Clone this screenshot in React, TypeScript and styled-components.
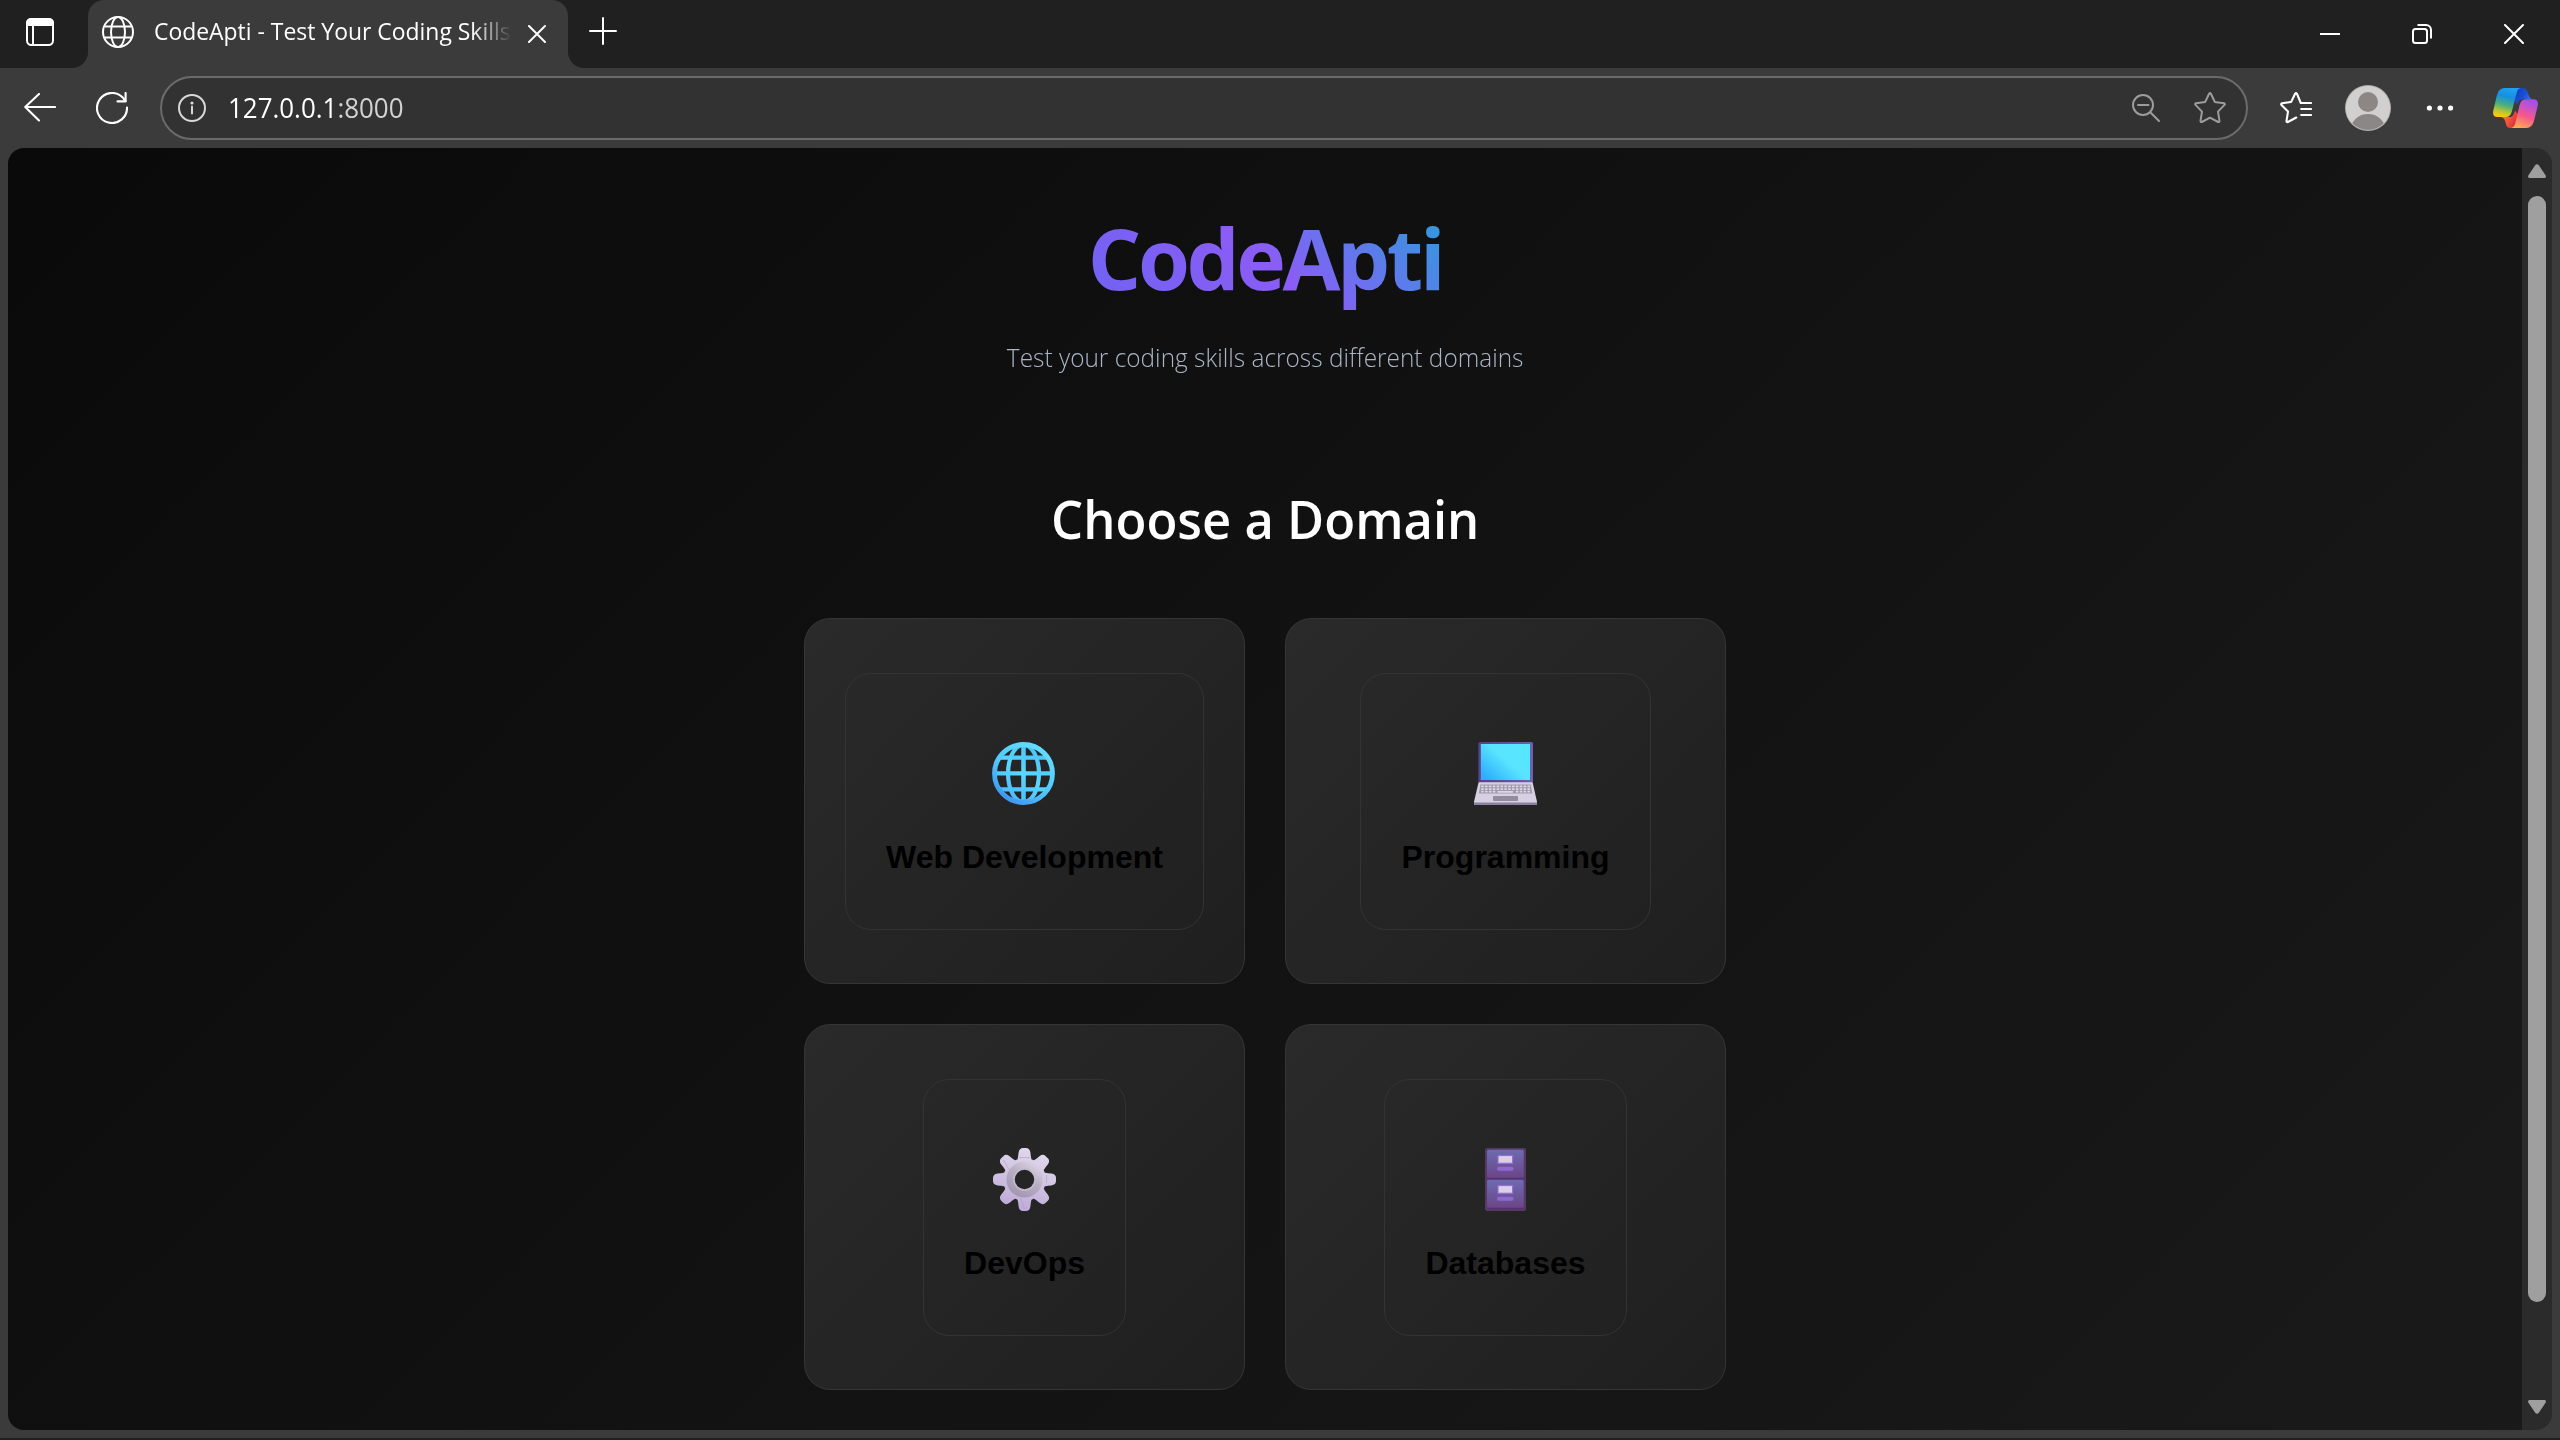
import React from 'react';
import styled, { createGlobalStyle } from 'styled-components';

const UI_FONT = "'Open Sans', 'Noto Sans', sans-serif";
const BUTTON_FONT = "'Liberation Sans', Arial, sans-serif";

const GlobalStyle = createGlobalStyle`
  * { box-sizing: border-box; }
  body { margin: 0; background: #3b3b3b; overflow: hidden; }
  svg { display: block; flex: none; }
`;

/* ---------- browser window ---------- */

const Window = styled.div`
  width: 2560px;
  height: 1440px;
  display: flex;
  flex-direction: column;
  overflow: hidden;
  background: #3b3b3b;
  border-bottom: 2px solid #211e1f;
  font-family: ${UI_FONT};
`;

const TabStrip = styled.div`
  height: 68px;
  flex: none;
  display: flex;
  background: #202020;
`;

const TabActions = styled.div`
  width: 88px;
  padding: 18px 0 0 26px;
`;

const Tab = styled.div`
  position: relative;
  width: 480px;
  height: 68px;
  padding: 0 22px 4px 14px;
  display: flex;
  align-items: center;
  background: #3b3b3b;
  border-radius: 16px 16px 0 0;

  &::before,
  &::after {
    content: '';
    position: absolute;
    bottom: 0;
    width: 16px;
    height: 16px;
  }
  &::before {
    left: -16px;
    background: radial-gradient(circle at 0 0, #202020 15.5px, #3b3b3b 16.5px);
  }
  &::after {
    right: -16px;
    background: radial-gradient(circle at 100% 0, #202020 15.5px, #3b3b3b 16.5px);
  }
`;

const TabTitle = styled.div`
  width: 358px;
  margin-left: 20px;
  height: 40px;
  overflow: hidden;
  mask-image: linear-gradient(90deg, #000 318px, transparent 358px);
`;

const Condensed = styled.span<{ $scale: number; $origin?: string }>`
  display: inline-block;
  white-space: nowrap;
  transform: scaleX(${(p) => p.$scale});
  transform-origin: ${(p) => p.$origin ?? 'left'} center;
`;

const TabText = styled(Condensed)`
  font-size: 23.5px;
  line-height: 39px;
  color: #fff;
`;

const TabClose = styled.div`
  margin-left: auto;
  padding-top: 3px;
`;

const NewTab = styled.div`
  padding: 17px 0 0 21px;
`;

const WindowControls = styled.div`
  margin-left: auto;
  padding: 24px 36px 0 0;
  display: flex;
  gap: 72px;
`;

const Toolbar = styled.div`
  height: 80px;
  flex: none;
  display: flex;
  align-items: center;
  padding: 0 22px 0 24px;
`;

const NavButtons = styled.div`
  width: 136px;
  display: flex;
  align-items: center;
  gap: 40px;
`;

const AddressBar = styled.div`
  width: 2088px;
  height: 64px;
  display: flex;
  align-items: center;
  padding: 0 20px 0 16px;
  border: 2px solid #6b6b6b;
  border-radius: 32px;
  background: #323232;
`;

const Url = styled.div`
  margin-left: 22px;
  flex: 1;
  font-size: 28px;
  line-height: 44px;
  padding-bottom: 2px;
  color: #fff;
`;

const Port = styled.span`
  color: #d2d2d2;
`;

const AddressActions = styled.div`
  display: flex;
  align-items: center;
  gap: 34px;
`;

const ToolbarActions = styled.div`
  flex: 1;
  display: flex;
  align-items: center;
  gap: 33px;
  padding-left: 32px;
`;

const CopilotButton = styled.div`
  margin-left: auto;
`;

/* ---------- page viewport ---------- */

const Viewport = styled.div`
  flex: none;
  height: 1282px;
  margin: 0 8px;
  display: flex;
  overflow: hidden;
  border-radius: 16px;
  background: #2b2b2b;
`;

const Page = styled.main`
  flex: 1;
  height: 1375px;
  display: flex;
  flex-direction: column;
  align-items: center;
  padding-top: 54px;
  background: linear-gradient(135deg, #0a0a0a 0%, #1a1a1a 100%);
`;

const Scrollbar = styled.div`
  width: 30px;
  height: 1282px;
  display: flex;
  flex-direction: column;
  align-items: center;
  padding: 16px 0 16px;
`;

const Thumb = styled.div`
  width: 18px;
  height: 1106px;
  margin: 18px 0 98px;
  border-radius: 9px;
  background: #9f9f9f;
`;

const Header = styled.header`
  width: 516px;
  display: flex;
  flex-direction: column;
  align-items: center;
`;

const Title = styled.h1`
  width: 516px;
  margin: 0;
  text-align: center;
  font-size: 84px;
  font-weight: 700;
  line-height: 112px;
  letter-spacing: -3.4px;
  white-space: nowrap;
  color: transparent;
  background: linear-gradient(45deg, #6366f1, #8b5cf6, #06b6d4);
  background-clip: text;
  -webkit-background-clip: text;
`;

const Subtitle = styled.p`
  margin: 23px 0 0;
  font-size: 26.2px;
  font-weight: 300;
  line-height: 40px;
  color: #a9b6c6;
`;

const SectionTitle = styled.h2`
  margin: 106px 0 63px;
  font-size: 52.4px;
  font-weight: 600;
  line-height: 72px;
  color: #fff;
`;

const DomainGrid = styled.section`
  display: grid;
  grid-template-columns: repeat(2, 441px);
  grid-auto-rows: 366px;
  gap: 40px;
`;

const DomainCard = styled.div`
  display: flex;
  flex-direction: column;
  align-items: center;
  padding-top: 54px;
  border: 1px solid #353535;
  border-radius: 26px;
  background: linear-gradient(135deg, #2a2a2a 0%, #1f1f1f 100%);
`;

const DomainButton = styled.button`
  height: 257px;
  margin: 0;
  padding: 68px 40px 0;
  display: flex;
  flex-direction: column;
  align-items: center;
  border: 1px solid #333333;
  border-radius: 26px;
  background: transparent;
  color: #000;
  font-family: ${BUTTON_FONT};
`;

const DomainName = styled.span`
  margin-top: 34px;
  font-size: 32px;
  font-weight: 700;
  line-height: 37px;
  white-space: nowrap;
`;

/* ---------- browser icons ---------- */

const TabActionsIcon = () => (
  <svg width="28" height="28" viewBox="0 0 28 28" fill="none">
    <rect x="1" y="1" width="26" height="26" rx="4.5" stroke="#fff" strokeWidth="2" />
    <path d="M0 8V5a5 5 0 0 1 5-5h18a5 5 0 0 1 5 5v3z" fill="#fff" />
    <path d="M7 8v19" stroke="#fff" strokeWidth="2" />
  </svg>
);

const TabGlobe = () => (
  <svg width="32" height="32" viewBox="0 0 32 32" fill="none" stroke="#fff" strokeWidth="2">
    <circle cx="16" cy="16" r="15" />
    <ellipse cx="16" cy="16" rx="7" ry="15" />
    <path d="M2.5 10.5h27M2.5 21.5h27" />
  </svg>
);

const Cross = ({ size, weight }: { size: number; weight: number }) => (
  <svg width={size} height={size} viewBox={`0 0 ${size} ${size}`} fill="none" stroke="#fff" strokeWidth={weight} strokeLinecap="round">
    <path d={`M1 1L${size - 1} ${size - 1}M${size - 1} 1L1 ${size - 1}`} />
  </svg>
);

const Plus = () => (
  <svg width="28" height="28" viewBox="0 0 28 28" stroke="#fff" strokeWidth="2" strokeLinecap="round">
    <path d="M14 1v26M1 14h26" />
  </svg>
);

const Minimize = () => (
  <svg width="20" height="20" viewBox="0 0 20 20">
    <path d="M0 10h20" stroke="#fff" strokeWidth="2" />
  </svg>
);

const Restore = () => (
  <svg width="20" height="20" viewBox="0 0 20 20" fill="none" stroke="#fff" strokeWidth="2">
    <rect x="1" y="5" width="14" height="14" rx="2.5" />
    <path d="M5.5 1H14a5 5 0 0 1 5 5v8.5" />
  </svg>
);

const BackArrow = () => (
  <svg width="32" height="30" viewBox="0 0 32 30" fill="none" stroke="#fff" strokeWidth="2.1" strokeLinecap="round" strokeLinejoin="round">
    <path d="M31 14H1.2M15 1L1.2 14 15 27.5" />
  </svg>
);

const Reload = () => (
  <svg width="32" height="32" viewBox="0 0 32 32" fill="none" stroke="#fff" strokeWidth="2.1" strokeLinecap="round" strokeLinejoin="round">
    <path d="M31 15.5A15 15 0 1 1 26.8 5.6L29.5 9" />
    <path d="M29.6 1v8.4H21.5" />
  </svg>
);

const Info = () => (
  <svg width="28" height="28" viewBox="0 0 28 28" fill="none" stroke="#d8d8d8" strokeWidth="2" strokeLinecap="round">
    <circle cx="14" cy="14" r="13" />
    <path d="M14 12.5v7" />
    <circle cx="14" cy="9" r="1.6" fill="#d8d8d8" stroke="none" />
  </svg>
);

const ZoomOut = () => (
  <svg width="28" height="28" viewBox="0 0 28 28" fill="none" stroke="#9c9c9c" strokeWidth="2" strokeLinecap="round">
    <circle cx="11" cy="11" r="10" />
    <path d="M6 11h10.5M18.5 18.5L27 27" />
  </svg>
);

const Star = () => (
  <svg width="32" height="32" viewBox="0 0 32 32" fill="none" stroke="#9c9c9c" strokeWidth="2" strokeLinejoin="round">
    <path d="M15.1 1.7q.9-1.4 1.8 0L20.8 9.9 30 11.3q1.4.5.5 1.6L24 19.6l1.5 9.3q0 1.6-1.4 1.1L16 25.7 7.9 30q-1.4.5-1.4-1.1L8 19.6 1.5 12.9q-.9-1.1.5-1.6L11.2 9.9z" />
  </svg>
);

const Favorites = () => (
  <svg width="32" height="32" viewBox="0 0 32 32" fill="none" stroke="#fff" strokeWidth="2.1" strokeLinecap="round" strokeLinejoin="round">
    <path d="M31 11h-10.2L16.9 1.7q-.9-1.4-1.8 0L11.2 9.9 2 11.3q-1.4.5-.5 1.6L8 19.6 6.5 28.9q0 1.6 1.4 1.1L16.3 25.5M21.2 17H31M21.2 23H31" />
  </svg>
);

const Avatar = () => (
  <svg width="46" height="46" viewBox="0 0 46 46">
    <defs>
      <clipPath id="avatar-clip"><circle cx="23" cy="23" r="22" /></clipPath>
    </defs>
    <circle cx="23" cy="23" r="23" fill="#b5b3b1" />
    <circle cx="23" cy="23" r="22" fill="#d2d0ce" />
    <g fill="#8a8785">
      <circle cx="23" cy="17" r="10" />
      <ellipse cx="23" cy="44" rx="17" ry="15" clipPath="url(#avatar-clip)" />
    </g>
  </svg>
);

const More = () => (
  <svg width="32" height="8" viewBox="-2 0 32 8" fill="#fff">
    <circle cx="3.4" cy="4" r="2.6" />
    <circle cx="14" cy="4" r="2.6" />
    <circle cx="24.6" cy="4" r="2.6" />
  </svg>
);

const Copilot = () => (
  <svg width="45" height="40" viewBox="9.5 10 45 40">
    <defs>
      <linearGradient id="cp-left" x1="0.6" y1="0" x2="0.35" y2="1">
        <stop offset="0" stopColor="#1fa2f0" />
        <stop offset="0.3" stopColor="#1590e0" />
        <stop offset="0.6" stopColor="#4cae7c" />
        <stop offset="0.85" stopColor="#c2c82c" />
        <stop offset="1" stopColor="#ffc80a" />
      </linearGradient>
      <linearGradient id="cp-fold" x1="0" y1="0" x2="1" y2="0.6">
        <stop offset="0" stopColor="#1238b8" />
        <stop offset="0.6" stopColor="#1b50d8" />
        <stop offset="1" stopColor="#2f80ea" />
      </linearGradient>
      <linearGradient id="cp-right" x1="0.7" y1="0" x2="0.3" y2="1">
        <stop offset="0" stopColor="#a44ee8" />
        <stop offset="0.25" stopColor="#c254cc" />
        <stop offset="0.55" stopColor="#f4568e" />
        <stop offset="1" stopColor="#ffab52" />
      </linearGradient>
      <linearGradient id="cp-tail" x1="0" y1="0" x2="1" y2="0.5">
        <stop offset="0" stopColor="#ff9440" />
        <stop offset="0.5" stopColor="#fa5a3c" />
        <stop offset="1" stopColor="#d8303c" />
      </linearGradient>
    </defs>
    <path d="M33 10h6q4 0 5.2 4.2L46 19q.8 2 3 2.2H38.5Q35 21.500 33 27l-2-6z" fill="url(#cp-fold)" />
    <path d="M31 50h-4.5q-3 0-4-3.8Q21.5 39.5 17.5 39H27q3-.2 4.5-6.5l3 4z" fill="url(#cp-tail)" />
    <path d="M21 10h16.500q-3.2.3-4.3 4.5L28.5 33q-1.5 6-6 6H14q-5.5 0-4.2-6.5L13.5 17Q15.5 10 21 10z" fill="url(#cp-left)" />
    <path d="M43 50H27.5q3-.3 4.2-4.5L36 27.5q1.5-6.3 6-6.3h8q5.5 0 4.2 6.5L50.5 43Q48.5 50 43 50z" fill="url(#cp-right)" />
  </svg>
);

const ScrollArrow = ({ down }: { down?: boolean }) => (
  <svg width="18" height="14" viewBox="0 0 18 14">
    <path
      d={down
        ? 'M1.2 0h15.6q1.6.7.9 2.5L11 12.5q-2 2.6-4 0L.3 2.5Q-.4.7 1.2 0z'
        : 'M1.2 14h15.6q1.6-.7.9-2.5L11 1.5q-2-2.6-4 0L.3 11.5Q-.4 13.3 1.2 14z'}
      fill="#9f9f9f"
    />
  </svg>
);

/* ---------- domain icons ---------- */

const WebIcon = () => (
  <svg width="65" height="63" viewBox="0 0 65 63" fill="none" stroke="url(#web-fill)">
    <defs>
      <linearGradient id="web-fill" gradientUnits="userSpaceOnUse" x1="46" y1="4" x2="12" y2="58">
        <stop offset="0" stopColor="#62dcff" />
        <stop offset="0.55" stopColor="#4fc8ff" />
        <stop offset="1" stopColor="#3f94f0" />
      </linearGradient>
      <linearGradient id="web-lines" gradientUnits="userSpaceOnUse" x1="46" y1="8" x2="16" y2="56">
        <stop offset="0" stopColor="#4cc4fa" />
        <stop offset="0.5" stopColor="#5ad6ff" />
        <stop offset="1" stopColor="#4cb8fa" />
      </linearGradient>
    </defs>
    <g stroke="url(#web-lines)" strokeWidth="4.2">
      <path d="M8 15.6h47M3 31.3h57M8 47.4h47" />
      <path d="M31.5 3v57" strokeWidth="4.6" />
      <ellipse cx="31.5" cy="31.5" rx="15.5" ry="28.5" />
    </g>
    <circle cx="31.5" cy="31.5" r="29" strokeWidth="4.8" />
  </svg>
);

const KEY_ROWS = [44.2, 46.8, 49.4];
const KEY_COLUMNS = Array.from({ length: 13 }, (_, i) => 7.2 + i * 3.85);

const ProgrammingIcon = () => (
  <svg width="63" height="63" viewBox="0 0 63 63">
    <defs>
      <linearGradient id="screen" x1="0" y1="0.9" x2="0.9" y2="0.15">
        <stop offset="0.05" stopColor="#2eaeff" />
        <stop offset="0.58" stopColor="#58e4ff" />
        <stop offset="1" stopColor="#58e6ff" />
      </linearGradient>
      <linearGradient id="bezel" x1="0" y1="0" x2="1" y2="0">
        <stop offset="0" stopColor="#5a3f86" />
        <stop offset="1" stopColor="#6f62ae" />
      </linearGradient>
    </defs>
    <rect x="4.3" y="0" width="54.7" height="41" rx="2" fill="url(#bezel)" />
    <rect x="6.8" y="2" width="49.2" height="36" fill="url(#screen)" />
    <path d="M4.6 40.2h54l4.4 19.5v2q0 1.3-1.3 1.3H1.3Q0 63 0 61.7v-2z" fill="#d6d0e2" />
    <path d="M0 60.6h63v1.2q0 1.2-1.3 1.2H1.3Q0 63 0 61.8z" fill="#8f809f" />
    <path d="M6.4 42.6h50.400l1.5 9H4.9z" fill="#a09aad" />
    <g fill="#dcd7e6">
      {KEY_ROWS.map((y, row) =>
        KEY_COLUMNS.map((x, col) =>
          row === 2 && col > 3 && col < 9 ? null : <rect key={`${row}-${col}`} x={x} y={y - 0.6} width="2.6" height="1.7" rx="0.4" />,
        ),
      )}
      <rect x="23.5" y="49" width="15.5" height="1.7" rx="0.4" />
    </g>
    <rect x="19" y="54" width="25" height="5" rx="0.8" fill="#918c9e" />
  </svg>
);

const GEAR_ANGLES = [0, 45, 90, 135, 180, 225, 270, 315];

const DevOpsIcon = () => (
  <svg width="63" height="63" viewBox="0 0 63 63">
    <defs>
      <linearGradient id="gear" gradientUnits="userSpaceOnUse" x1="42" y1="2" x2="22" y2="62">
        <stop offset="0" stopColor="#e0d8ec" />
        <stop offset="0.5" stopColor="#d0c3e2" />
        <stop offset="1" stopColor="#bda8d8" />
      </linearGradient>
      <linearGradient id="gear-ring" x1="0.85" y1="0.1" x2="0.3" y2="1">
        <stop offset="0" stopColor="#d9d0e2" />
        <stop offset="0.45" stopColor="#b8aec4" />
        <stop offset="1" stopColor="#a296b0" />
      </linearGradient>
      <mask id="gear-mask">
        <rect width="63" height="63" fill="#fff" />
        <circle cx="31.5" cy="31.5" r="9.7" fill="#000" />
      </mask>
      <mask id="gear-teeth">
        {GEAR_ANGLES.map((angle) => (
          <path
            key={angle}
            d="M23 14.5Q24.8 12.5 25.2 8L25.6 4.5Q26.3 0 30 0h3q3.7 0 4.4 4.5L37.8 8q.4 4.5 2.2 6.5L36 24h-9z"
            transform={`rotate(${angle} 31.5 31.5)`}
            fill="#fff"
          />
        ))}
      </mask>
    </defs>
    <g mask="url(#gear-mask)">
      <circle cx="31.5" cy="31.5" r="21.3" fill="url(#gear)" />
      <rect width="63" height="63" fill="url(#gear)" mask="url(#gear-teeth)" />
      <path d="M26 9.6h11M53.6 27v8M10.5 12l5.5 9.5M27.5 50l4 11" stroke="#b3a2c8" strokeWidth="0.7" fill="none" />
      <circle cx="31.5" cy="31.5" r="18" fill="url(#gear-ring)" />
      <circle cx="31.5" cy="31.5" r="10.6" fill="none" stroke="#c4bacd" strokeWidth="1.6" />
    </g>
  </svg>
);

const DatabaseIcon = () => (
  <svg width="41" height="63" viewBox="0 0 41 63">
    <defs>
      <linearGradient id="drawer" x1="0" y1="0" x2="0" y2="1">
        <stop offset="0" stopColor="#6d6bb0" />
        <stop offset="1" stopColor="#6a4688" />
      </linearGradient>
    </defs>
    <rect width="41" height="63" rx="2" fill="#553a66" />
    {[1.8, 31.8].map((y) => (
      <g key={y} transform={`translate(0 ${y})`}>
        <rect x="1.8" y="0" width="37.2" height="29" rx="1.8" fill="#5a2c74" />
        <rect x="2" y="0" width="36.8" height="28" rx="1.6" fill="url(#drawer)" />
        <rect x="13" y="5.7" width="14.6" height="7.8" fill="#dccfea" stroke="#9470d0" strokeWidth="1.2" />
        <rect x="12" y="17" width="16.6" height="4" rx="1.8" fill="#9068d0" />
      </g>
    ))}
  </svg>
);

const DOMAINS = [
  { name: 'Web Development', Icon: WebIcon },
  { name: 'Programming', Icon: ProgrammingIcon },
  { name: 'DevOps', Icon: DevOpsIcon },
  { name: 'Databases', Icon: DatabaseIcon },
];

export default function App() {
  return (
    <>
      <GlobalStyle />
      <Window>
        <TabStrip>
          <TabActions><TabActionsIcon /></TabActions>
          <Tab>
            <TabGlobe />
            <TabTitle><TabText $scale={0.975}>CodeApti - Test Your Coding Skills</TabText></TabTitle>
            <TabClose><Cross size={18} weight={2} /></TabClose>
          </Tab>
          <NewTab><Plus /></NewTab>
          <WindowControls>
            <Minimize />
            <Restore />
            <Cross size={20} weight={2} />
          </WindowControls>
        </TabStrip>
        <Toolbar>
          <NavButtons>
            <BackArrow />
            <Reload />
          </NavButtons>
          <AddressBar>
            <Info />
            <Url><Condensed $scale={0.926}>127.0.0.1<Port>:8000</Port></Condensed></Url>
            <AddressActions>
              <ZoomOut />
              <Star />
            </AddressActions>
          </AddressBar>
          <ToolbarActions>
            <Favorites />
            <Avatar />
            <More />
            <CopilotButton><Copilot /></CopilotButton>
          </ToolbarActions>
        </Toolbar>
        <Viewport>
          <Page>
            <Header>
              <Title>CodeApti</Title>
              <Subtitle>
                <Condensed $scale={0.932} $origin="center">Test your coding skills across different domains</Condensed>
              </Subtitle>
            </Header>
            <SectionTitle>
              <Condensed $scale={0.968} $origin="center">Choose a Domain</Condensed>
            </SectionTitle>
            <DomainGrid>
              {DOMAINS.map(({ name, Icon }) => (
                <DomainCard key={name}>
                  <DomainButton>
                    <Icon />
                    <DomainName>{name}</DomainName>
                  </DomainButton>
                </DomainCard>
              ))}
            </DomainGrid>
          </Page>
          <Scrollbar>
            <ScrollArrow />
            <Thumb />
            <ScrollArrow down />
          </Scrollbar>
        </Viewport>
      </Window>
    </>
  );
}
